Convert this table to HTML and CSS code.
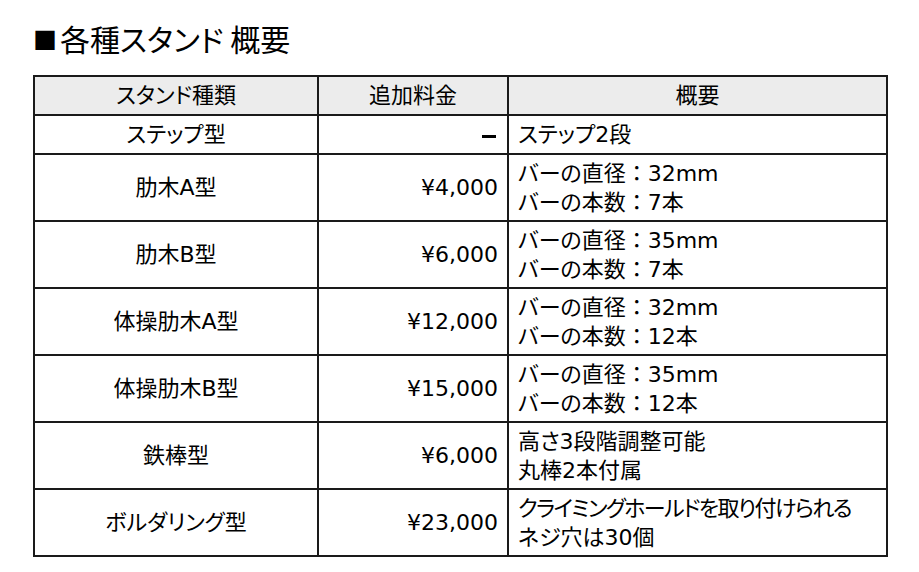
FILE: index.html
```html
<!DOCTYPE html>
<html lang="ja">
<head>
<meta charset="utf-8">
<link rel="stylesheet" href="styles.css">
</head>
<body>
<div class="page">
  <h1 class="title"><span class="mark">■</span>各種スタンド 概要</h1>
  <table class="grid">
    <colgroup>
      <col class="c1"><col class="c2"><col class="c3">
    </colgroup>
    <thead>
      <tr class="head">
        <th>スタンド種類</th><th>追加料金</th><th>概要</th>
      </tr>
    </thead>
    <tbody>
      <tr class="short">
        <td class="name">ステップ型</td><td class="price"><span class="dash"></span></td><td class="desc">ステップ2段</td>
      </tr>
      <tr class="tall">
        <td class="name">肋木A型</td><td class="price">¥4,000</td><td class="desc">バーの直径<span class="colon">：</span>32mm<br>バーの本数<span class="colon">：</span>7本</td>
      </tr>
      <tr class="tall">
        <td class="name">肋木B型</td><td class="price">¥6,000</td><td class="desc">バーの直径<span class="colon">：</span>35mm<br>バーの本数<span class="colon">：</span>7本</td>
      </tr>
      <tr class="tall">
        <td class="name">体操肋木A型</td><td class="price">¥12,000</td><td class="desc">バーの直径<span class="colon">：</span>32mm<br>バーの本数<span class="colon">：</span>12本</td>
      </tr>
      <tr class="tall">
        <td class="name">体操肋木B型</td><td class="price">¥15,000</td><td class="desc">バーの直径<span class="colon">：</span>35mm<br>バーの本数<span class="colon">：</span>12本</td>
      </tr>
      <tr class="tall">
        <td class="name">鉄棒型</td><td class="price">¥6,000</td><td class="desc">高さ3段階調整可能<br>丸棒2本付属</td>
      </tr>
      <tr class="tall">
        <td class="name">ボルダリング型</td><td class="price">¥23,000</td><td class="desc"><span class="tight">クライミングホールドを取り付けられる</span><br>ネジ穴は30個</td>
      </tr>
    </tbody>
  </table>
</div>
</body>
</html>
```
FILE: styles.css
```css
html, body {
  margin: 0;
  padding: 0;
  background: #ffffff;
}
body {
  font-family: "DejaVu Sans", "Noto Sans CJK JP", sans-serif;
  color: #000000;
  font-feature-settings: "palt";
}
.page {
  padding: 17px 0 0 33px;
}
.title {
  margin: 0;
  height: 58px;
  font-family: "Noto Sans CJK JP", sans-serif;
  font-size: 30px;
  font-weight: normal;
  line-height: 42px;
}
.mark {
  display: inline-block;
  font-size: 24px;
  margin-right: 3px;
  vertical-align: 2px;
}
.grid {
  border-collapse: collapse;
  width: 853px;
  table-layout: fixed;
  font-size: 22px;
  line-height: 29px;
}
.c1 { width: 284px; }
.c2 { width: 190px; }
.c3 { width: 379px; }
.grid th, .grid td {
  border: 2px solid #1a1a1a;
  padding: 0 9px;
  vertical-align: middle;
  white-space: nowrap;
}
.grid th {
  background: #ececec;
  font-weight: normal;
  text-align: center;
}
.head { height: 39px; }
.short { height: 39px; }
.tall { height: 67px; }
.name { text-align: center; }
.price { text-align: right; }
.desc { text-align: left; }
.colon {
  font-feature-settings: normal;
  font-family: "Noto Sans CJK JP", sans-serif;
  line-height: 0;
}
.tight { letter-spacing: -1.6px; }
.dash {
  display: inline-block;
  width: 14px;
  height: 3px;
  background: #000;
  vertical-align: middle;
  margin-right: 2px;
}
```
